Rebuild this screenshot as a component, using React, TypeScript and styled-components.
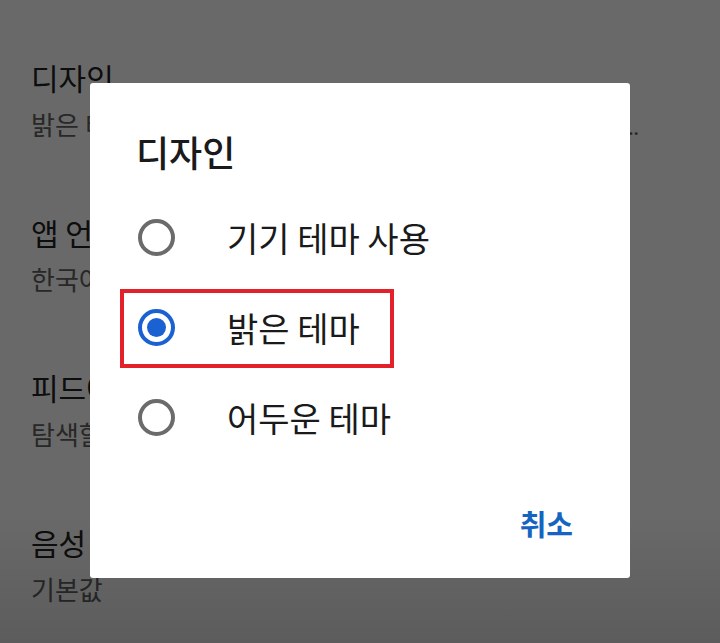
import React from "react";
import styled, { createGlobalStyle } from "styled-components";

const GlobalStyle = createGlobalStyle`
  html, body {
    margin: 0;
    padding: 0;
    background: #ffffff;
  }
  body {
    font-family: "Noto Sans CJK KR", "Noto Sans", Roboto, sans-serif;
    overflow: hidden;
  }
`;

const Page = styled.div`
  position: relative;
  width: 720px;
  height: 643px;
  overflow: hidden;
  background: #ffffff;
`;

const SettingsList = styled.ul`
  list-style: none;
  margin: 0;
  padding: 53px 0 0;
  display: flex;
  flex-direction: column;
`;

const SettingItem = styled.li`
  height: 155px;
  padding: 0 78px 0 31px;
  box-sizing: border-box;
`;

const SettingTitle = styled.div`
  font-size: 30px;
  line-height: 48px;
  color: #202020;
  white-space: nowrap;
`;

const SettingValue = styled.div`
  margin-top: 5px;
  font-family: Roboto, "Noto Sans CJK KR", sans-serif;
  font-size: 26px;
  line-height: 40px;
  color: #606060;
  white-space: nowrap;
  overflow: hidden;
  text-overflow: ellipsis;
`;

const Scrim = styled.div`
  position: absolute;
  inset: 0;
  background: linear-gradient(
    to bottom,
    rgba(0, 0, 0, 0.59) 0%,
    rgba(0, 0, 0, 0.59) 80%,
    rgba(0, 0, 0, 0.64) 100%
  );
  display: flex;
  justify-content: center;
  align-items: flex-start;
  padding-top: 83px;
  box-sizing: border-box;
`;

const Dialog = styled.div`
  width: 540px;
  height: 495px;
  background: #ffffff;
  border-radius: 3px;
  box-sizing: border-box;
  padding: 46px 0 35px;
  display: flex;
  flex-direction: column;
`;

const DialogTitle = styled.h2`
  margin: 0;
  padding: 0 46px;
  font-size: 36px;
  line-height: 44px;
  font-weight: 500;
  color: #1a1a1a;
`;

const OptionList = styled.div`
  margin-top: 19px;
  display: flex;
  flex-direction: column;
`;

const Option = styled.label<{ $highlighted?: boolean }>`
  position: relative;
  height: 90px;
  display: flex;
  align-items: center;
  gap: 52px;
  padding-left: 48px;
  font-size: 34px;
  color: #1a1a1a;

  &::after {
    content: "";
    display: ${(p) => (p.$highlighted ? "block" : "none")};
    position: absolute;
    left: 30px;
    top: 7px;
    width: 274px;
    height: 79px;
    box-sizing: border-box;
    border: 4px solid #e3212b;
  }
`;

const Radio = styled.span<{ $checked?: boolean }>`
  flex: none;
  width: 37px;
  height: 37px;
  box-sizing: border-box;
  border-radius: 50%;
  border: 4px solid ${(p) => (p.$checked ? "#1a62d1" : "#6b6b6b")};
  display: flex;
  align-items: center;
  justify-content: center;

  &::before {
    content: "";
    display: ${(p) => (p.$checked ? "block" : "none")};
    width: 19px;
    height: 19px;
    border-radius: 50%;
    background: #1a62d1;
  }
`;

const Footer = styled.div`
  margin-top: 41px;
  display: flex;
  justify-content: flex-end;
  padding-right: 57px;
`;

const TextButton = styled.button`
  border: none;
  background: none;
  padding: 0;
  font-family: inherit;
  font-size: 29px;
  line-height: 40px;
  font-weight: 700;
  color: #1565c0;
`;

const settings = [
  { title: "디자인", value: "밝은 테마 · 기기의 테마 설정과 관계없이 항상 밝은 테마를 사용합니다" },
  { title: "앱 언어", value: "한국어" },
  { title: "피드에서 재생", value: "탐색할 때 동영상 미리보기 재생" },
  { title: "음성 검색 언어", value: "기본값" },
];

const options = [
  { label: "기기 테마 사용", checked: false },
  { label: "밝은 테마", checked: true },
  { label: "어두운 테마", checked: false },
];

export default function App() {
  return (
    <Page>
      <GlobalStyle />
      <SettingsList>
        {settings.map((s) => (
          <SettingItem key={s.title}>
            <SettingTitle>{s.title}</SettingTitle>
            <SettingValue>{s.value}</SettingValue>
          </SettingItem>
        ))}
      </SettingsList>
      <Scrim>
        <Dialog>
          <DialogTitle>디자인</DialogTitle>
          <OptionList>
            {options.map((o) => (
              <Option key={o.label} $highlighted={o.checked}>
                <Radio $checked={o.checked} />
                {o.label}
              </Option>
            ))}
          </OptionList>
          <Footer>
            <TextButton>취소</TextButton>
          </Footer>
        </Dialog>
      </Scrim>
    </Page>
  );
}
